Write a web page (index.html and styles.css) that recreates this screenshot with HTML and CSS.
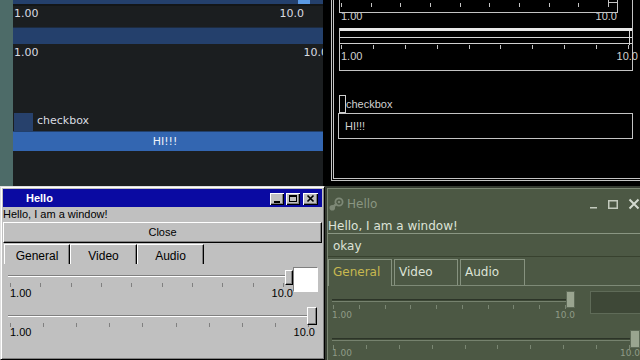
FILE: index.html
```html
<!DOCTYPE html>
<html>
<head>
<meta charset="utf-8">
<link rel="stylesheet" href="styles.css">
</head>
<body>
<div class="screen">
  <div class="top">
    <section class="dark">
      <div class="dark-strip"></div>
      <div class="dark-body">
        <div class="d-track d-track-a"><span class="d-handle"></span></div>
        <div class="d-labels d-labels-a"><span>1.00</span><span>10.0</span></div>
        <div class="d-track d-track-b"></div>
        <div class="d-labels d-labels-b"><span>1.00</span><span>10.0</span></div>
        <div class="d-check"><span class="d-box"></span><span class="d-check-label">checkbox</span></div>
        <div class="d-button">HI!!!</div>
      </div>
    </section>
    <section class="wire">
      <div class="wire-frame">
        <div class="w-group">
          <div class="w-s1">
            <div class="ticks w-ticks-a"><i></i><i></i><i></i><i></i><i></i><i></i><i></i><i></i><i></i><i></i></div>
            <span class="w-handle-a"></span>
          </div>
          <div class="labels w-labels-a"><span>1.00</span><span>10.0</span></div>
          <div class="w-s2">
            <div class="w-s2-track"><div class="w-s2-mid"></div><span class="w-handle-b"></span></div>
            <div class="ticks w-ticks-b"><i></i><i></i><i></i><i></i><i></i><i></i><i></i><i></i><i></i><i></i></div>
            <div class="labels w-labels-b"><span>1.00</span><span>10.0</span></div>
          </div>
        </div>
        <div class="w-check"><span class="w-box"></span><span>checkbox</span></div>
        <div class="w-button">HI!!!</div>
      </div>
    </section>
  </div>
  <div class="bottom">
    <section class="win">
      <div class="win-title">
        <span class="win-title-text">Hello</span>
        <span class="tb tb-min"><svg width="14" height="12" viewBox="0 0 14 12"><rect x="4" y="8" width="6" height="2" fill="#000"/></svg></span>
        <span class="tb tb-max"><svg width="14" height="12" viewBox="0 0 14 12"><rect x="3.5" y="2.5" width="7" height="6" fill="none" stroke="#000"/><rect x="3" y="2" width="8" height="2" fill="#000"/></svg></span>
        <span class="tb tb-close"><svg width="15" height="12" viewBox="0 0 15 12"><path d="M4.5 2.5l6 6M10.5 2.5l-6 6" stroke="#000" stroke-width="1.7"/></svg></span>
      </div>
      <div class="win-text">Hello, I am a window!</div>
      <div class="win-close">Close</div>
      <div class="win-tabs">
        <span class="win-tab tab-general">General</span>
        <span class="win-tab tab-video">Video</span>
        <span class="win-tab tab-audio">Audio</span>
      </div>
      <div class="win-panel">
        <div class="win-row">
          <div class="w95-slider w95-s1">
            <div class="w95-groove"></div>
            <span class="w95-handle"></span>
            <div class="ticks w95-ticks"><i></i><i></i><i></i><i></i><i></i><i></i><i></i><i></i><i></i><i></i></div>
            <div class="labels w95-labels"><span>1.00</span><span>10.0</span></div>
          </div>
          <div class="win-white"></div>
        </div>
        <div class="w95-slider w95-s2">
          <div class="w95-groove"></div>
          <span class="w95-handle"></span>
          <div class="ticks w95-ticks"><i></i><i></i><i></i><i></i><i></i><i></i><i></i><i></i><i></i><i></i></div>
          <div class="labels w95-labels"><span>1.00</span><span>10.0</span></div>
        </div>
      </div>
    </section>
    <section class="steam">
      <div class="st-win">
        <div class="st-title">
          <svg class="st-logo" width="16" height="15" viewBox="0 0 16 15"><circle cx="11" cy="5" r="3.6" fill="none" stroke="#7d8876" stroke-width="1.8"/><circle cx="11" cy="5" r="1.3" fill="#7d8876"/><path d="M8.2 7.2L5.5 9.5" stroke="#7d8876" stroke-width="2.4" stroke-linecap="round"/><circle cx="4.3" cy="10.8" r="2.8" fill="#7d8876"/></svg>
          <span class="st-title-text">Hello</span>
          <span class="st-btns">
            <svg class="st-min" width="7" height="12" viewBox="0 0 7 12"><rect x="0" y="9" width="7" height="1.5" fill="#c3cabd"/></svg>
            <svg class="st-max" width="10" height="12" viewBox="0 0 10 12"><rect x="0.75" y="2.75" width="8.5" height="7.5" fill="none" stroke="#c3cabd" stroke-width="1.5"/></svg>
            <svg class="st-close" width="12" height="12" viewBox="0 0 12 12"><path d="M1.5 1.5l9 9M10.5 1.5l-9 9" stroke="#d3d9cf" stroke-width="2"/></svg>
          </span>
        </div>
        <div class="st-text">Hello, I am a window!</div>
        <div class="st-okay">okay</div>
        <div class="st-tabs">
          <span class="st-tab st-tab-sel">General</span>
          <span class="st-tab st-tab-video">Video</span>
          <span class="st-tab st-tab-audio">Audio</span>
        </div>
        <div class="st-panel">
          <div class="st-row">
            <div class="st-slider st-s1">
              <div class="st-groove"></div>
              <span class="st-handle"></span>
              <div class="ticks st-ticks"><i></i><i></i><i></i><i></i><i></i><i></i><i></i><i></i><i></i><i></i></div>
              <div class="labels st-labels"><span>1.00</span><span>10.0</span></div>
            </div>
            <div class="st-box"></div>
          </div>
          <div class="st-slider st-s2">
            <div class="st-groove"></div>
            <span class="st-handle"></span>
            <div class="ticks st-ticks"><i></i><i></i><i></i><i></i><i></i><i></i><i></i><i></i><i></i><i></i></div>
            <div class="labels st-labels"><span>1.00</span><span>10.0</span></div>
          </div>
        </div>
      </div>
    </section>
  </div>
</div>
</body>
</html>
```
FILE: styles.css
```css
* { box-sizing: border-box; }
html, body { margin: 0; padding: 0; }
body { width: 640px; height: 360px; overflow: hidden; background: #000; }
.screen { width: 640px; height: 360px; display: flex; flex-direction: column; }
.top { height: 186px; display: flex; flex: none; }
.bottom { height: 174px; display: flex; flex: none; }

.ticks { display: flex; justify-content: space-between; }
.ticks i { display: block; width: 1px; height: 100%; }
.labels { display: flex; justify-content: space-between; white-space: nowrap; }

/* ---------- dark quadrant ---------- */
.dark { width: 323px; flex: none; display: flex; overflow: hidden; font: 11px/13px "DejaVu Sans", sans-serif; color: #d9dce0; }
.dark-strip { width: 13px; flex: none; background: #4d6b68; }
.dark-body { width: 310px; flex: none; background: #1b1e20; overflow: hidden; }
.d-track { position: relative; background: #24406c; }
.d-track-a { height: 6px; border-bottom: 2px solid #131618; }
.d-handle { position: absolute; left: 285px; top: 0; width: 12px; height: 4px; background: #5b9ae4; }
.d-labels { display: flex; justify-content: space-between; white-space: nowrap; }
.d-labels-a { margin-top: 1px; padding: 0 19px 0 1px; }
.d-track-b { margin-top: 7px; height: 17px; border-top: 1px solid #1d2b3f; }
.d-labels-b { margin-top: 2px; width: 315px; padding-left: 1px; }
.d-check { margin-top: 54px; height: 18px; display: flex; align-items: flex-start; gap: 4px; }
.d-box { width: 19px; height: 18px; margin-left: 1px; background: #27416c; }
.d-check-label { padding-top: 1px; }
.d-button { height: 20px; background: #3366b1; border-top: 1px solid #22406c; text-align: center; padding: 3px 6px 0 0; color: #eef2f8; }

/* ---------- wireframe quadrant ---------- */
.wire { flex: 1; min-width: 0; background: #000; overflow: hidden; padding-left: 8px; font: 11px/13px "Liberation Sans", Arial, sans-serif; color: #d0d0d0; }
.wire-frame { width: 340px; height: 181px; border-left: 3px double #c4c4c4; border-bottom: 3px double #c4c4c4; padding-left: 5px; }
.w-group { width: 294px; border-right: 1px solid #c4c4c4; }
.w-s1 { position: relative; width: 279px; height: 13px; border: 1px solid #c4c4c4; border-top: 0; padding-top: 3px; }
.w-ticks-a { height: 4px; margin: 0 8px 0 1px; }
.w-ticks-a i, .w-ticks-b i { background: #c4c4c4; }
.w-handle-a { position: absolute; left: 268px; top: -10px; width: 10px; height: 13px; border: 1px solid #c4c4c4; }
.w-labels-a { margin-top: -3px; padding: 0 15px 0 2px; }
.w-s2 { margin-top: 5px; height: 43px; border-left: 1px solid #c4c4c4; border-bottom: 1px solid #c4c4c4; }
.w-s2-track { position: relative; height: 16px; border-top: 3px solid #e8e8e8; border-bottom: 1px solid #cfcfcf; }
.w-s2-mid { margin-top: 6px; height: 1px; background: #d8d8d8; }
.w-handle-b { position: absolute; right: 2px; top: 0; width: 1px; height: 14px; background: #d8d8d8; }
.w-ticks-b { height: 4px; margin: 1px 3px 0 1px; }
.w-labels-b { margin: 1px -6px 0 0; padding-left: 1px; }
.w-check { margin-top: 24px; height: 18px; display: flex; align-items: center; }
.w-box { width: 7px; height: 18px; border: 1px solid #cfcfcf; }
.w-button { margin-left: -1px; width: 295px; height: 26px; border: 1px solid #c4c4c4; padding: 6px 0 0 6px; }

/* ---------- win95 window ---------- */
.win { width: 325px; flex: none; background: #c0c0c0; border: 1px solid; border-color: #dfdfdf #000 #000 #dfdfdf; padding: 2px; box-shadow: inset 1px 1px #fff, inset -1px -1px #808080; font: 11px/13px "Liberation Sans", Arial, sans-serif; color: #000; display: flex; flex-direction: column; }
.win-title { height: 18px; flex: none; background: #0a0aa2; display: flex; align-items: center; padding: 0 4px 0 23px; }
.win-title-text { font-weight: bold; color: #fff; }
.tb { display: block; width: 14px; height: 12px; margin-top: 2px; background: #c0c0c0; box-shadow: inset 1px 1px #fff, inset -1px -1px #000, inset -2px -2px #808080; }
.tb svg { display: block; }
.tb-min { margin-left: auto; }
.tb-max { margin-left: 2px; }
.tb-close { margin-left: 3px; width: 15px; }
.win-text { height: 15px; flex: none; padding-top: 1px; }
.win-close { height: 21px; flex: none; border: 1px solid; border-color: #fff #000 #000 #fff; box-shadow: inset -1px -1px #808080; text-align: center; padding-top: 3px; }
.win-tabs { margin-top: 1px; height: 20px; flex: none; display: flex; padding-left: 1px; }
.win-tab { height: 20px; border-top: 1px solid #fff; border-left: 1px solid #fff; border-right: 1px solid #000; box-shadow: inset -1px 0 #808080; text-align: center; font-size: 12px; line-height: 14px; padding-top: 4px; }
.tab-general { width: 66px; }
.tab-video { width: 67px; }
.tab-audio { width: 67px; }
.win-panel { flex: 1; padding-left: 5px; }
.win-row { margin-top: 3px; display: flex; }
.w95-slider { position: relative; flex: none; }
.w95-s1 { width: 285px; padding-top: 8px; }
.w95-s2 { width: 309px; padding-top: 15px; }
.w95-groove { height: 2px; border-top: 1px solid #808080; border-bottom: 1px solid #fff; }
.w95-s1 .w95-groove { margin-right: 6px; }
.w95-s2 .w95-groove { margin-right: 9px; }
.w95-handle { position: absolute; right: 0; background: #c0c0c0; border: 1px solid; border-color: #fff #000 #000 #fff; box-shadow: inset -1px -1px #808080; }
.w95-s1 .w95-handle { top: 3px; width: 8px; height: 15px; }
.w95-s2 .w95-handle { top: 7px; width: 10px; height: 18px; }
.w95-ticks { height: 4px; margin-top: 6px; margin-left: 2px; }
.w95-s1 .w95-ticks { margin-right: 9px; }
.w95-s2 .w95-ticks { margin-right: 8px; }
.w95-ticks i { background: #808080; }
.w95-s1 .w95-labels { padding-left: 2px; }
.w95-s2 .w95-labels { margin-top: -1px; padding: 0 2px; }
.win-white { width: 25px; height: 25px; flex: none; background: #fff; border: 1px solid; border-color: #808080 #fff #fff #808080; }

/* ---------- steam window ---------- */
.steam { flex: 1; min-width: 0; background: #353b31; padding: 2px 0 0 2px; overflow: hidden; font: 12px/14px "DejaVu Sans", sans-serif; color: #dde3d7; }
.st-win { height: 100%; background: #4c5844; border-left: 1px solid #7a8672; border-top: 1px solid #7a8672; display: flex; flex-direction: column; }
.st-title { height: 30px; flex: none; display: flex; align-items: center; }
.st-logo { display: block; flex: none; }
.st-title-text { margin-left: 3px; color: #8a9682; }
.st-btns { margin-left: auto; display: flex; align-items: center; }
.st-btns svg { display: block; }
.st-max { margin-left: 11px; }
.st-close { margin-left: 10px; }
.st-text { height: 14px; flex: none; }
.st-okay { flex: none; border-top: 1px solid #8a9683; border-bottom: 1px solid #38422f; padding: 5px 0 3px 5px; }
.st-tabs { margin-top: 2px; height: 27px; flex: none; display: flex; gap: 2px; border-bottom: 1px solid #7e8a77; }
.st-tab { height: 26px; border: 1px solid #86927f; border-bottom: 0; padding: 5px 0 0 4px; }
.st-tab-sel { width: 64px; height: 27px; background: #4c5844; color: #c8b850; }
.st-tab-video { width: 64px; }
.st-tab-audio { width: 65px; }
.st-panel { flex: 1; padding-left: 4px; }
.st-row { margin-top: 5px; display: flex; }
.st-slider { position: relative; flex: none; }
.st-s1 { width: 243px; padding-top: 8px; }
.st-s2 { width: 308px; padding-top: 17px; }
.st-groove { height: 3px; background: #3c4735; border-top: 1px solid #2c3428; border-bottom: 1px solid #76826e; }
.st-s1 .st-groove { margin-right: 7px; }
.st-s2 .st-groove { margin-right: 5px; }
.st-handle { position: absolute; right: 0; background: #9aa590; border: 1px solid #5e6a57; }
.st-s1 .st-handle { top: 0; width: 9px; height: 17px; }
.st-s2 .st-handle { top: 9px; width: 10px; height: 18px; }
.st-ticks { height: 4px; margin-left: 1px; }
.st-s1 .st-ticks { margin-top: 3px; margin-right: 9px; }
.st-s2 .st-ticks { margin-top: 4px; margin-right: 10px; }
.st-ticks i { background: #7a8672; }
.st-labels { font-size: 9px; line-height: 11px; color: #8f9b87; }
.st-s1 .st-labels { margin-top: 1px; }
.st-s2 .st-labels { margin-top: -1px; }
.st-box { margin-left: 15px; width: 52px; height: 23px; flex: none; background: #3e4837; border: 1px solid #5f6b58; }
```
